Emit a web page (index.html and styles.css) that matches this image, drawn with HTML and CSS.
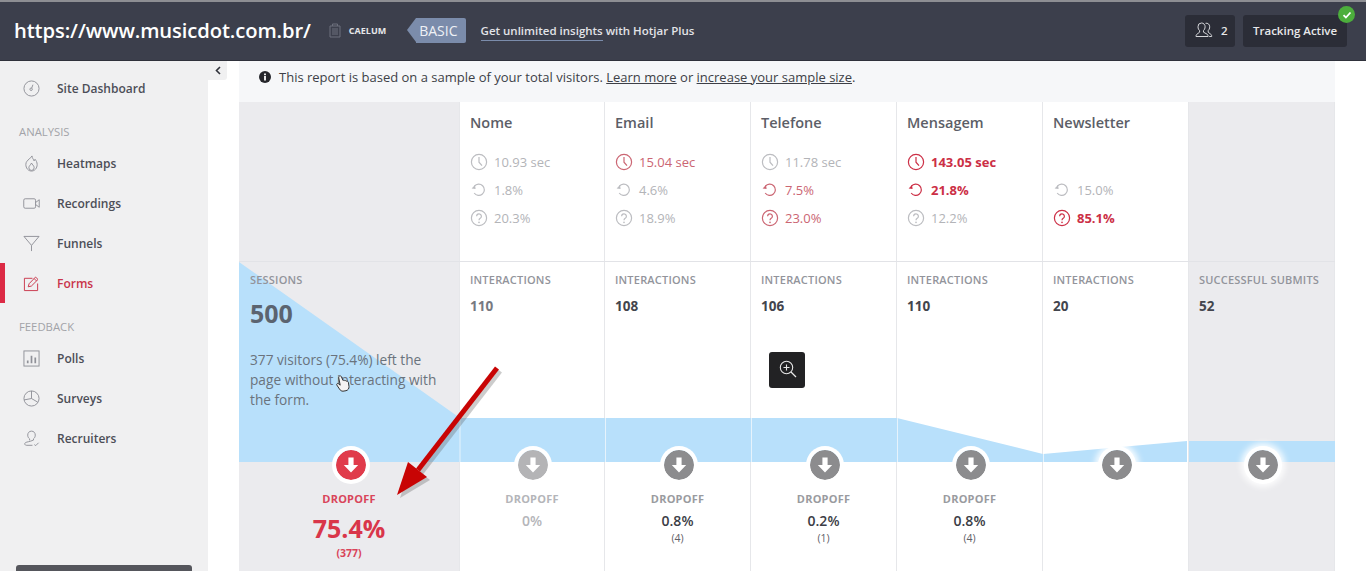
FILE: index.html
```html
<!DOCTYPE html>
<html>
  <head>
    <title>Form Analysis</title>
    <link rel="stylesheet" href="styles.css">
  </head>

  <body>
    <svg class="defs" width="0" height="0">
      <symbol id="i-clock" viewBox="0 0 18 18">
        <circle cx="9" cy="9" r="7.6" fill="none" stroke="currentColor" stroke-width="1.2"/>
        <path d="M9 4v5.2l3 3.4" fill="none" stroke="currentColor" stroke-width="1.2"/>
      </symbol>
      <symbol id="i-retry" viewBox="0 0 18 18">
        <path d="M4.4 5.2A5.6 5.6 0 1 1 4.2 12" fill="none" stroke="currentColor" stroke-width="1.2"/>
        <path d="M1.6 7.6l3.4-3.6.6 4z" fill="currentColor"/>
      </symbol>
      <symbol id="i-help" viewBox="0 0 18 18">
        <circle cx="9" cy="9" r="7.6" fill="none" stroke="currentColor" stroke-width="1.2"/>
        <path d="M6.6 7.2a2.4 2.4 0 1 1 3.6 2.1c-.8.5-1.2.9-1.2 2" fill="none" stroke="currentColor" stroke-width="1.2"/>
        <circle cx="9" cy="13.4" r=".8" fill="currentColor"/>
      </symbol>
      <symbol id="i-down" viewBox="0 0 30 30">
        <path d="M12.4 7.5h5.2v7.5h4.6L15 22.6 7.8 15h4.6z" fill="#fff"/>
      </symbol>
    </svg>

    <header class="topbar">
      <div class="topbar-left">
        <div class="site-url">https://www.musicdot.com.br/</div>
        <svg class="org-icon" width="12" height="15" viewBox="0 0 12 15">
          <path d="M1 3h10v11H1zM3.5 3V1h5v2M4 5v7M6 5v7M8 5v7" fill="none" stroke="#6d707c" stroke-width="1"/>
        </svg>
        <div class="org-name">CAELUM</div>
        <div class="plan-tag">BASIC</div>
        <div class="upsell"><a>Get unlimited insights</a> with Hotjar Plus</div>
      </div>
      <div class="topbar-right">
        <div class="top-btn users-btn">
          <svg width="18" height="18" viewBox="0 0 18 18">
            <path d="M6.5 2a3.6 3.6 0 0 1 3.6 3.8c0 1.7-.8 3-1.6 3.8v1.6l3.6 2c.7.4 1 1 1 2.3H1c0-1.3.3-1.9 1-2.3l2.6-2V9.6C3.7 8.8 3 7.5 3 5.8A3.6 3.6 0 0 1 6.5 2zM10.5 2.3c2.2-.6 4.2 1 4.2 3.5 0 1.7-.7 3-1.5 3.8v1.6l2.5 2c.7.4 1 1 1 2.3h-2.5" fill="none" stroke="#d5d6da" stroke-width="1"/>
          </svg>
          <span>2</span>
        </div>
        <div class="top-btn tracking-btn">
          Tracking Active
          <span class="check-badge">
            <svg width="10" height="10" viewBox="0 0 10 10"><path d="M1.5 5.2l2.4 2.3 4.6-5" fill="none" stroke="#fff" stroke-width="1.8"/></svg>
          </span>
        </div>
      </div>
    </header>

    <div class="page">
      <nav class="sidebar">
        <div class="collapse-tab">
          <svg width="6" height="9" viewBox="0 0 6 9"><path d="M5 1L1.5 4.5 5 8" fill="none" stroke="#30323a" stroke-width="1.6"/></svg>
        </div>
        <a class="nav-item nav-first">
          <svg class="nav-icon" viewBox="0 0 18 18"><circle cx="9" cy="9" r="8"/><circle cx="8.6" cy="9.8" r="1.3"/><path d="M9.2 8.6l1.3-3.6"/></svg>
          Site Dashboard
        </a>
        <div class="nav-label">ANALYSIS</div>
        <a class="nav-item">
          <svg class="nav-icon" viewBox="0 0 18 18"><path d="M9.5 1c.2 2.500 1.700 3.400 2.200 5.300.6-.4.900-1 1-1.800 1.300 1.400 2.300 3.400 2.300 5.500 0 4-2.600 7-6 7s-6-3-6-7c0-2.800 2-4.300 3.500-5.800C7.700 3 9 2.500 9.500 1z"/><path d="M9 8.500c.4 1.500 2.800 2.600 2.800 5a2.800 2.800 0 0 1-5.600 0c0-2 2.200-3.200 2.800-5z"/></svg>
          Heatmaps
        </a>
        <a class="nav-item">
          <svg class="nav-icon" viewBox="0 0 18 18"><rect x=".8" y="4" width="12.5" height="10" rx="1.5"/><path d="M13.3 8l3.9-3v8l-3.9-3"/></svg>
          Recordings
        </a>
        <a class="nav-item">
          <svg class="nav-icon" viewBox="0 0 18 18"><path d="M1 1.5h16L9 11zM9 11v6"/></svg>
          Funnels
        </a>
        <a class="nav-item nav-active">
          <svg class="nav-icon" viewBox="0 0 18 18"><path d="M15.5 9v7.5H1.5V3.5H10"/><path d="M5.5 12.5l1-3.300 6.800-7 2.600 2.500-7 7zM11.800 3.800l2.500 2.500"/></svg>
          Forms
        </a>
        <div class="nav-label nav-label-second">FEEDBACK</div>
        <a class="nav-item">
          <svg class="nav-icon" viewBox="0 0 18 18"><rect x="1" y="1" width="16" height="16"/><path d="M5 14v-3M9 14V6M13 14V8" stroke-width="1.8"/></svg>
          Polls
        </a>
        <a class="nav-item">
          <svg class="nav-icon" viewBox="0 0 18 18"><circle cx="9" cy="9" r="8"/><path d="M9 1V9l6.800 4M9 9l-7.800 1.500"/></svg>
          Surveys
        </a>
        <a class="nav-item">
          <svg class="nav-icon" viewBox="0 0 18 18"><path d="M9 1.200c2.500 0 4 1.900 4 4.200 0 1.800-.9 3.200-1.900 4v1.300l-3.300 1.200c-2 .7-5.800.8-6 2.600 0 1.300 1 1.700 2.200 1.700h6"/><path d="M7 11V9.400c-1.200-.9-2-2.200-2-4 0-2.300 1.500-4.200 4-4.200M12 15.500l1.500 1 3-3"/></svg>
          Recruiters
        </a>
        <div class="nav-bottom-btn"></div>
      </nav>

      <main class="report">
        <div class="notice">
          <svg width="12" height="12" viewBox="0 0 12 12"><circle cx="6" cy="6" r="6" fill="#25262b"/><rect x="5.1" y="5" width="1.8" height="4.5" fill="#fff"/><rect x="5.1" y="2.5" width="1.8" height="1.7" fill="#fff"/></svg>
          <span>This report is based on a sample of your total visitors. <a>Learn more</a> or <a>increase your sample size</a>.</span>
        </div>

        <div class="grid-row fields-row">
          <div class="cell cell-grey"></div>
          <div class="cell">
            <h3>Nome</h3>
            <div class="metric"><svg class="m-icon"><use href="#i-clock"/></svg>10.93 sec</div>
            <div class="metric"><svg class="m-icon"><use href="#i-retry"/></svg>1.8%</div>
            <div class="metric"><svg class="m-icon"><use href="#i-help"/></svg>20.3%</div>
          </div>
          <div class="cell">
            <h3>Email</h3>
            <div class="metric warn"><svg class="m-icon"><use href="#i-clock"/></svg>15.04 sec</div>
            <div class="metric"><svg class="m-icon"><use href="#i-retry"/></svg>4.6%</div>
            <div class="metric"><svg class="m-icon"><use href="#i-help"/></svg>18.9%</div>
          </div>
          <div class="cell">
            <h3>Telefone</h3>
            <div class="metric"><svg class="m-icon"><use href="#i-clock"/></svg>11.78 sec</div>
            <div class="metric warn"><svg class="m-icon"><use href="#i-retry"/></svg>7.5%</div>
            <div class="metric warn"><svg class="m-icon"><use href="#i-help"/></svg>23.0%</div>
          </div>
          <div class="cell">
            <h3>Mensagem</h3>
            <div class="metric bad"><svg class="m-icon"><use href="#i-clock"/></svg>143.05 sec</div>
            <div class="metric bad"><svg class="m-icon"><use href="#i-retry"/></svg>21.8%</div>
            <div class="metric"><svg class="m-icon"><use href="#i-help"/></svg>12.2%</div>
          </div>
          <div class="cell">
            <h3>Newsletter</h3>
            <div class="metric metric-empty"></div>
            <div class="metric"><svg class="m-icon"><use href="#i-retry"/></svg>15.0%</div>
            <div class="metric bad"><svg class="m-icon"><use href="#i-help"/></svg>85.1%</div>
          </div>
          <div class="cell cell-grey"></div>
        </div>

        <div class="grid-row funnel-row">
          <svg class="funnel" width="1096" height="200" viewBox="0 0 1096 200">
            <path d="M0 0L221 156H658L804 192L948 179V200H0z" fill="#b8e0fb"/>
            <path d="M950 179H1096V200H950z" fill="#b8e0fb"/>
            <path d="M221 156V200M366.5 156V200M512.5 156V200M658.5 156V200M804.5 192V200" stroke="#e6f3fc" stroke-width="1"/>
          </svg>

          <div class="cell cell-grey cell-sessions">
            <div class="cell-head">
              <div class="label">SESSIONS</div>
              <div class="sessions-num">500</div>
              <p class="sessions-text">377 visitors (75.4%) left the page without interacting with the form.</p>
            </div>
            <div class="dropoff drop-bad">
              <div class="drop-circle"><svg><use href="#i-down"/></svg></div>
              <div class="drop-label">DROPOFF</div>
              <div class="drop-pct">75.4%</div>
              <div class="drop-count">(377)</div>
            </div>
          </div>
          <div class="cell">
            <div class="cell-head">
              <div class="label">INTERACTIONS</div>
              <div class="count count-light">110</div>
            </div>
            <div class="dropoff drop-none">
              <div class="drop-circle"><svg><use href="#i-down"/></svg></div>
              <div class="drop-label">DROPOFF</div>
              <div class="drop-pct">0%</div>
            </div>
          </div>
          <div class="cell">
            <div class="cell-head">
              <div class="label">INTERACTIONS</div>
              <div class="count">108</div>
            </div>
            <div class="dropoff">
              <div class="drop-circle"><svg><use href="#i-down"/></svg></div>
              <div class="drop-label">DROPOFF</div>
              <div class="drop-pct">0.8%</div>
              <div class="drop-count">(4)</div>
            </div>
          </div>
          <div class="cell">
            <div class="cell-head">
              <div class="label">INTERACTIONS</div>
              <div class="count">106</div>
            </div>
            <div class="dropoff">
              <div class="drop-circle"><svg><use href="#i-down"/></svg></div>
              <div class="drop-label">DROPOFF</div>
              <div class="drop-pct">0.2%</div>
              <div class="drop-count">(1)</div>
            </div>
          </div>
          <div class="cell">
            <div class="cell-head">
              <div class="label">INTERACTIONS</div>
              <div class="count">110</div>
            </div>
            <div class="dropoff">
              <div class="drop-circle"><svg><use href="#i-down"/></svg></div>
              <div class="drop-label">DROPOFF</div>
              <div class="drop-pct">0.8%</div>
              <div class="drop-count">(4)</div>
            </div>
          </div>
          <div class="cell">
            <div class="cell-head">
              <div class="label">INTERACTIONS</div>
              <div class="count">20</div>
            </div>
            <div class="dropoff">
              <div class="drop-circle drop-glow"><svg><use href="#i-down"/></svg></div>
            </div>
          </div>
          <div class="cell cell-grey">
            <div class="cell-head">
              <div class="label">SUCCESSFUL SUBMITS</div>
              <div class="count">52</div>
            </div>
            <div class="dropoff">
              <div class="drop-circle drop-glow"><svg><use href="#i-down"/></svg></div>
            </div>
          </div>

          <div class="zoom-btn">
            <svg width="20" height="20" viewBox="0 0 20 20">
              <circle cx="8.5" cy="8.5" r="6.2" fill="none" stroke="#e8e8e8" stroke-width="1.1"/>
              <path d="M5.5 8.5h6M8.5 5.5v6" stroke="#e8e8e8" stroke-width="1.1"/>
              <path d="M13 13l5 5" stroke="#e8e8e8" stroke-width="1.3"/>
            </svg>
          </div>
        </div>
      </main>
    </div>

    <!-- annotation drawn on top of the recording -->
    <svg class="arrow" width="130" height="150" viewBox="0 0 130 150">
      <path d="M105 3L26 105" stroke="#555" stroke-opacity=".3" stroke-width="5" transform="translate(3 3)"/>
      <path d="M5 130L16 97L35 112z" fill="#555" fill-opacity=".3" transform="translate(3 3)"/>
      <path d="M105 3L26 105" stroke="#c80404" stroke-width="5"/>
      <path d="M5 130L16 97L35 112z" fill="#c80404"/>
    </svg>
    <svg class="hand" width="16" height="18" viewBox="0 0 16 18">
      <path d="M4.5 2c1-.6 1.7.2 2 1L8 6.5c.7-.6 1.500-.4 1.900.3.700-.4 1.400-.1 1.700.5.800-.3 1.600.2 1.800 1l.6 4.200c.2 2-1 3.700-3 4.200l-3 .5c-1.500 0-2.700-.8-3.400-2L1.800 11c-.5-1 .6-2 1.600-1.300l1.800 1.500L3.700 3.700c-.2-.7.2-1.400.8-1.700z" fill="#f4f4f4" stroke="#333" stroke-width="1"/>
    </svg>
  </body>
</html>
```

FILE: styles.css
```css
* {
  box-sizing: border-box;
}
html, body {
  height: 571px;
  overflow: hidden;
}
body {
  position: relative;
  margin: 0;
  background-color: #fff;
  color: #4c4f58;
  font-family: "Open Sans", sans-serif;
}
.defs {
  position: absolute;
}

/* top bar */
.topbar {
  display: flex;
  align-items: center;
  height: 61px;
  padding: 0 19px 0 14px;
  border-top: 2px solid #8d8e93;
  border-bottom: 1px solid #2f313b;
  background-color: #3c3f4c;
  color: #fff;
}
.topbar-left {
  display: flex;
  align-items: center;
  padding-bottom: 2px;
}
.site-url {
  font-size: 20.2px;
  font-weight: 600;
  letter-spacing: -0.1px;
}
.org-icon {
  margin-left: 18px;
}
.org-name {
  margin-left: 8px;
  font-size: 9px;
  font-weight: 700;
  color: #e6e7ea;
}
.plan-tag {
  position: relative;
  display: flex;
  align-items: center;
  height: 25px;
  margin-left: 30px;
  padding: 0 8px 0 3px;
  background-color: #7b8cab;
  color: #eef1f6;
  font-size: 14px;
  border-radius: 0 2px 2px 0;
}
.plan-tag::before {
  content: "";
  position: absolute;
  left: -9px;
  top: 0;
  border-top: 12.5px solid transparent;
  border-bottom: 12.5px solid transparent;
  border-right: 9px solid #7b8cab;
}
.upsell {
  margin-left: 15px;
  font-size: 11.5px;
  font-weight: 600;
  color: #e2e3e7;
}
.upsell a {
  padding-bottom: 2px;
  border-bottom: 1px solid #7b8cab;
}
.topbar-right {
  display: flex;
  gap: 8px;
  margin-left: auto;
}
.top-btn {
  position: relative;
  display: flex;
  align-items: center;
  height: 32px;
  padding-bottom: 2px;
  border-radius: 3px;
  background-color: #2b2d37;
  font-size: 11.5px;
  font-weight: 600;
  color: #e8e8ea;
}
.users-btn {
  gap: 8px;
  width: 50px;
  padding-left: 10px;
}
.tracking-btn {
  width: 104px;
  padding-left: 10px;
}
.check-badge {
  position: absolute;
  top: -9px;
  right: -8px;
  display: flex;
  align-items: center;
  justify-content: center;
  width: 17px;
  height: 17px;
  border-radius: 50%;
  background-color: #4cae3c;
}

/* sidebar */
.page {
  display: flex;
  height: 510px;
}
.sidebar {
  position: relative;
  flex: none;
  width: 208px;
  padding-top: 7px;
  background-color: #f0f0f1;
}
.collapse-tab {
  position: absolute;
  top: 0;
  left: 208px;
  display: flex;
  align-items: center;
  justify-content: center;
  width: 19px;
  height: 19px;
  border-radius: 0 0 3px 0;
  background-color: #f0f0f1;
}
.nav-item {
  position: relative;
  display: flex;
  align-items: center;
  gap: 17px;
  height: 40px;
  padding-left: 23px;
  font-size: 12px;
  font-weight: 600;
  color: #4c4e57;
}
.nav-first {
  margin-bottom: 16px;
}
.nav-icon {
  flex: none;
  width: 17px;
  height: 17px;
  fill: none;
  stroke: #8f9198;
  stroke-width: 1;
}
.nav-label {
  height: 16px;
  margin-bottom: 3px;
  padding-left: 19px;
  font-size: 11.3px;
  line-height: 16px;
  color: #a2a3a8;
}
.nav-label-second {
  margin-top: 16px;
  margin-bottom: 3px;
}
.nav-active {
  color: #c9354a;
}
.nav-active .nav-icon {
  stroke: #c9354a;
}
.nav-active::before {
  content: "";
  position: absolute;
  left: 0;
  top: 0;
  width: 5px;
  height: 40px;
  background-color: #dc2a45;
}
.nav-bottom-btn {
  position: absolute;
  left: 16px;
  bottom: -6px;
  width: 176px;
  height: 12px;
  border-radius: 3px;
  background-color: #55565c;
}

/* report */
.report {
  flex: none;
  width: 1096px;
  margin-left: 31px;
}
.notice {
  display: flex;
  align-items: center;
  gap: 8px;
  height: 41px;
  padding: 0 0 10px 20px;
  background-color: #f6f7f9;
  font-size: 13px;
  color: #3d3f47;
}
.notice a {
  text-decoration: underline;
}
.grid-row {
  display: grid;
  grid-template-columns: 221px 145px repeat(5, 146px);
}
.fields-row {
  height: 160px;
  border-bottom: 1px solid #e2e3e7;
}
.funnel-row {
  position: relative;
  height: 309px;
}
.cell {
  padding: 11px 10px 0;
  border-right: 1px solid #e6e7ea;
}
.cell-grey {
  background-color: #ebebee;
}
.cell h3 {
  margin: 0 0 15px;
  font-size: 14.5px;
  line-height: 20px;
  font-weight: 600;
  color: #5c5e67;
}
.metric {
  display: flex;
  align-items: center;
  gap: 6px;
  height: 28px;
  font-size: 13px;
  color: #b3b4b8;
}
.m-icon {
  width: 18px;
  height: 18px;
  color: #bcbdc1;
}
.warn, .warn .m-icon {
  color: #cb6673;
}
.bad, .bad .m-icon {
  color: #cc2f46;
}
.bad {
  font-weight: 700;
}

/* funnel row */
.funnel {
  position: absolute;
  top: 0;
  left: 0;
}
.funnel-row .cell {
  display: flex;
  flex-direction: column;
  padding: 0;
}
.cell-head {
  position: relative;
  height: 184px;
  padding: 11px 10px 0;
}
.cell-sessions .cell-head {
  padding-left: 11px;
}
.label {
  font-size: 11px;
  line-height: 14px;
  font-weight: 600;
  letter-spacing: 0.2px;
  color: #92949b;
}
.count {
  margin-top: 10px;
  font-size: 13.5px;
  line-height: 18px;
  font-weight: 700;
  color: #43454d;
}
.count-light {
  color: #777981;
}
.sessions-num {
  margin-top: 9px;
  font-size: 25px;
  line-height: 34px;
  font-weight: 700;
  color: #5b6470;
}
.sessions-text {
  width: 192px;
  margin: 20px 0 0;
  font-size: 13.7px;
  line-height: 20px;
  color: #6a737d;
}
.dropoff {
  position: relative;
  display: flex;
  flex-direction: column;
  align-items: center;
}
.drop-circle {
  width: 38px;
  height: 38px;
  margin-left: 2px;
  padding: 4px;
  border-radius: 50%;
  background-color: #8c8c8e;
  background-clip: content-box;
  box-shadow: inset 0 0 0 4px #fff;
}
.drop-circle svg {
  display: block;
  width: 30px;
  height: 30px;
}
.drop-glow {
  box-shadow: inset 0 0 0 4px #fff, 0 0 6px 3px rgba(255, 255, 255, 0.9);
}
.drop-label {
  margin-top: 8px;
  font-size: 11px;
  line-height: 14px;
  font-weight: 700;
  letter-spacing: 0.2px;
  color: #9a9b9f;
}
.drop-pct {
  margin-top: 6px;
  font-size: 14px;
  line-height: 18px;
  font-weight: 600;
  color: #3b3d45;
}
.drop-count {
  font-size: 10.5px;
  line-height: 16px;
  color: #5f6068;
}
.drop-none .drop-circle {
  background-color: #b4b4b6;
}
.drop-none .drop-label,
.drop-none .drop-pct {
  color: #b4b5b9;
}
.drop-bad .drop-circle {
  margin-left: 3px;
  background-color: #e03b4b;
}
.drop-bad .drop-label {
  color: #d9455a;
}
.drop-bad .drop-pct {
  margin-top: 6px;
  font-size: 25px;
  line-height: 33px;
  font-weight: 700;
  color: #d9364a;
}
.drop-bad .drop-count {
  font-weight: 700;
  color: #d9455a;
}
.zoom-btn {
  position: absolute;
  left: 530px;
  top: 90px;
  display: flex;
  align-items: center;
  justify-content: center;
  width: 36px;
  height: 36px;
  padding: 0 0 2px 2px;
  border-radius: 3px;
  background-color: #222224;
}

/* things lying over the page */
.arrow {
  position: absolute;
  left: 392px;
  top: 365px;
}
.hand {
  position: absolute;
  left: 335px;
  top: 374px;
}
```
